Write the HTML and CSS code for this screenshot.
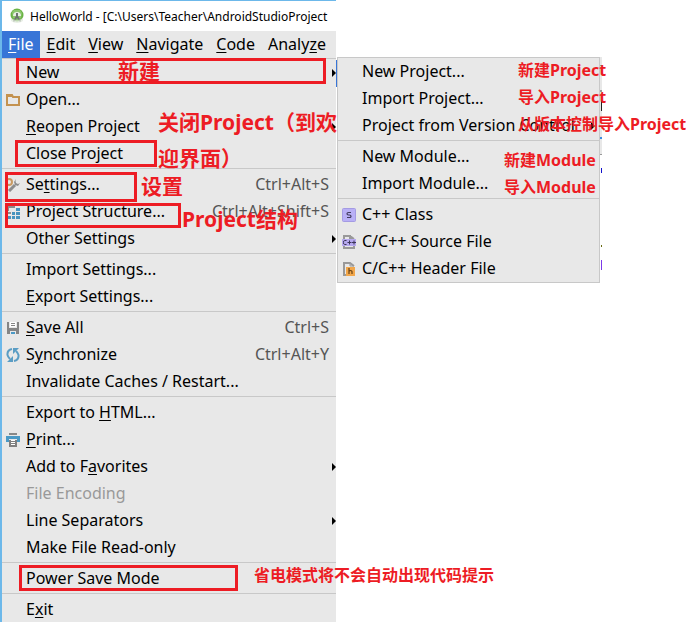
FILE: index.html
```html
<!DOCTYPE html>
<html lang="zh-CN">
<head>
    <meta charset="UTF-8">
    <meta name="viewport" content="width=device-width, initial-scale=1.0">
    <title>HelloWorld - File menu</title>
    <link rel="stylesheet" href="styles.css">
</head>
<body>
    <div class="window">
        <header class="titlebar">
            <svg class="logo" viewBox="0 0 16 16">
                <circle cx="8" cy="7" r="6.5" fill="#6ab344"/>
                <path d="M3 4l2-2 6 0 2 3-1 5-4 2-4-2z" fill="#8cc66d"/>
                <path d="M4 8a4 4 0 0 1 8 0z" fill="#e8eee5"/>
                <path d="M7 5h2v3l3 5-1 1-3-4-3 4-1-1 3-5z" fill="#6c746e"/>
                <path d="M2 10q6 4 12 0v3q-6 4-12 0z" fill="#dfe8dc" opacity=".7"/>
            </svg>
            <span class="title">HelloWorld - [C:\Users\Teacher\AndroidStudioProject</span>
        </header>

        <nav class="menubar">
            <button class="active"><u>F</u>ile</button>
            <button><u>E</u>dit</button>
            <button><u>V</u>iew</button>
            <button><u>N</u>avigate</button>
            <button><u>C</u>ode</button>
            <button>Analy<u>z</u>e</button>
        </nav>

        <ul class="menu">
            <li class="separator first"></li>
            <li class="item has-sub">
                <button>New</button>
                <span class="note big note-new">新建</span>
                <span class="mark mark-new"></span>

                <ul class="menu submenu">
                    <li class="item"><button>New Project...</button><span class="note note-project">新建Project</span></li>
                    <li class="item"><button>Import Project...</button><span class="note note-project">导入Project</span></li>
                    <li class="item has-sub"><button>Project from Version Control</button><span class="note note-project">从版本控制导入Project</span></li>
                    <li class="separator"></li>
                    <li class="item"><button>New Module...</button><span class="note note-module">新建Module</span></li>
                    <li class="item"><button>Import Module...</button><span class="note note-module">导入Module</span></li>
                    <li class="separator"></li>
                    <li class="item">
                        <svg class="icon" viewBox="0 0 14 14">
                            <rect x=".5" y=".5" width="13" height="13" rx="1" fill="#b9b0f6" stroke="#a49be3"/>
                            <path d="M9 4.5H6.5Q5 4.5 5 5.7T6.5 7h1Q9 7 9 8.3T7.500 9.500H5" fill="none" stroke="#413b5d" stroke-width="1.200"/>
                        </svg>
                        <button>C++ Class</button>
                    </li>
                    <li class="item">
                        <svg class="icon" viewBox="0 0 14 14">
                            <path d="M2 4V1h6l4 3M8 0v4h4M2 11v2h10v-2" fill="none" stroke="#999" stroke-width="2"/>
                            <path d="M0 4h14v7H0z" fill="#b6a9ef"/>
                            <path d="M4.500 5.500H2.500Q1.500 5.500 1.500 7.500T2.500 9.500h2M5.500 7.500h4M7.500 5.500v4M10 7.500h4M12 5.500v4" fill="none" stroke="#3d3659"/>
                        </svg>
                        <button>C/C++ Source File</button>
                    </li>
                    <li class="item">
                        <svg class="icon" viewBox="0 0 14 14">
                            <path d="M4 13H2V1h6l4 3" fill="none" stroke="#999" stroke-width="2"/>
                            <path d="M8 1v3h4" fill="none" stroke="#999"/>
                            <path d="M4 5h9v9H4z" fill="#f2a74b"/>
                            <path d="M7 6v6M7 9.500Q7 8.500 8.500 8.500T10 9.500V12" fill="none" stroke="#6b4416" stroke-width="1.200"/>
                        </svg>
                        <button>C/C++ Header File</button>
                    </li>
                    <!-- editor code peeking out behind the popup -->
                    <li class="peek" aria-hidden="true">
                        <svg width="2" height="226" viewBox="0 0 2 226">
                            <path d="M0 0h2v98H0z" fill="#e8e8e8"/>
                            <path d="M0 8h2v1H0zM0 33h2v2H0zM0 97h2v1H0z" fill="#999"/>
                            <path d="M1 43h1v11H1z" fill="#222"/>
                            <path d="M0 80h2v2H0z" fill="#3a8de0"/>
                            <path d="M1 111h1v5H1z" fill="#11c"/>
                            <path d="M1 188h1v2H1z" fill="#686a10"/>
                            <path d="M1 203h1v10H1z" fill="#7c3ae8"/>
                        </svg>
                    </li>
                </ul>
            </li>
            <li class="item">
                <svg class="icon" viewBox="0 0 14 14">
                    <path d="M1 12V2h5l1 2h6v8z" fill="none" stroke="#c4924f" stroke-width="2"/>
                    <path d="M1 2h5v2H1z" fill="#c4924f"/>
                </svg>
                <button>Open...</button>
            </li>
            <li class="item has-sub"><button><u>R</u>eopen Project</button></li>
            <li class="item">
                <button>Close Project</button>
                <span class="mark mark-close"></span>
                <span class="note big note-close">关闭Project（到欢<br>迎界面）</span>
            </li>
            <li class="separator"></li>
            <li class="item">
                <svg class="icon" viewBox="0 0 14 14">
                    <circle cx="3" cy="4" r="3" fill="none" stroke="#c99a62" stroke-width="2"/>
                    <path d="M3 13l6-6" stroke="#8c8c8c" stroke-width="3"/>
                    <path d="M10 1L8 4l1 3 3 1 2-3-2 1-2-1-.5-2z" fill="#8c8c8c"/>
                </svg>
                <button>Se<u>t</u>tings...</button>
                <kbd>Ctrl+Alt+S</kbd>
                <span class="mark mark-settings"></span>
                <span class="note big note-settings">设置</span>
            </li>
            <li class="item">
                <svg class="icon" viewBox="0 0 14 14">
                    <path d="M1 1h8v2H3v3H1zM1 7h4v2H1zM1 11h4v2H1z" fill="#8c8c8c"/>
                    <path d="M10 3h4v3h-4zM6 7h3v3H6zM10 7h4v3h-4zM6 11h3v3H6zM10 11h4v3h-4zM2 11h3v3H2z" fill="#4793be"/>
                </svg>
                <button>Project Structure...</button>
                <kbd>Ctrl+Alt+Shift+S</kbd>
                <span class="mark mark-structure"></span>
                <span class="note big note-structure">Project结构</span>
            </li>
            <li class="item has-sub"><button>Other Settings</button></li>
            <li class="separator"></li>
            <li class="item"><button>Import Settings...</button></li>
            <li class="item"><button><u>E</u>xport Settings...</button></li>
            <li class="separator"></li>
            <li class="item">
                <svg class="icon" viewBox="0 0 14 14">
                    <path d="M1 1h2v6h8V1h2v12h-3v-3H4v3H1z" fill="#858585"/>
                    <path d="M4 1h6v5H4z" fill="#fff"/>
                    <path d="M5 2.500h4M5 4.500h4" stroke="#858585"/>
                    <path d="M5 11h4v2H5z" fill="#4b99c5"/>
                </svg>
                <button><u>S</u>ave All</button>
                <kbd>Ctrl+S</kbd>
            </li>
            <li class="item">
                <svg class="icon" viewBox="0 0 14 14">
                    <path d="M6 1Q1 2 1.500 7 2 9 4 11M8 13Q13 12 12.500 7 12 5 10 3" fill="none" stroke="#5b9dc4" stroke-width="2"/>
                    <path d="M7 8v6H1zM7 6V0h6z" fill="#5b9dc4"/>
                </svg>
                <button>S<u>y</u>nchronize</button>
                <kbd>Ctrl+Alt+Y</kbd>
            </li>
            <li class="item"><button>Invalidate Caches / Restart...</button></li>
            <li class="separator"></li>
            <li class="item"><button>Export to <u>H</u>TML...</button></li>
            <li class="item">
                <svg class="icon" viewBox="0 0 14 14">
                    <path d="M3 0h8v2H3z" fill="#888"/>
                    <path d="M0 3h14v6h-3V6H3v3H0z" fill="#4b99c5"/>
                    <path d="M3 7h8v7H3z" fill="#808080"/>
                    <path d="M5 7h4v5H5z" fill="#fff"/>
                    <path d="M5 8.500h4M5 10.500h4" stroke="#808080"/>
                </svg>
                <button><u>P</u>rint...</button>
            </li>
            <li class="item has-sub"><button>Add to F<u>a</u>vorites</button></li>
            <li class="item"><button disabled>File Encoding</button></li>
            <li class="item has-sub"><button>Line Separators</button></li>
            <li class="item"><button>Make File Read-only</button></li>
            <li class="separator"></li>
            <li class="item">
                <button>Power Save Mode</button>
                <span class="mark mark-power"></span>
                <span class="note note-power">省电模式将不会自动出现代码提示</span>
            </li>
            <li class="separator"></li>
            <li class="item"><button>E<u>x</u>it</button></li>
        </ul>
    </div>
</body>
</html>
```
FILE: styles.css
```css
* {
    box-sizing: border-box;
}

body {
    margin: 0;
    height: 100vh;
    overflow: hidden;
    background: #fff;
    font-family: "Noto Sans", "Noto Sans CJK SC", sans-serif;
    font-size: 16px;
    color: #000;
}

.window {
    width: 336px;
    min-height: 100vh;
    background: #e8e8e8;
    border-top: 1px solid #6cb8ea;
    border-left: 2px solid #6cb8ea;
}

.titlebar {
    display: flex;
    align-items: center;
    gap: 5px;
    height: 30px;
    padding-left: 7px;
    background: #fff;
    overflow: hidden;
}

.logo {
    flex: none;
    width: 16px;
    height: 16px;
}

.title {
    font-size: 12px;
    white-space: nowrap;
}

button {
    padding: 0 0 2px;
    border: none;
    background: none;
    font: inherit;
    color: inherit;
    text-align: left;
    white-space: nowrap;
}

button:disabled {
    color: #999;
}

u {
    text-decoration-thickness: 1px;
    text-underline-offset: 2px;
}

.menubar {
    display: flex;
    gap: 1px;
    height: 27px;
}

.menubar button {
    padding: 0 6px 2px;
}

.menubar .active {
    background: #3875d7;
    color: #fff;
}

.menu {
    margin: 0;
    padding: 0;
    list-style: none;
}

.item {
    position: relative;
    display: flex;
    align-items: center;
    height: 27px;
    padding: 0 7px 0 24px;
}

.item button {
    flex: 1;
}

.icon {
    position: absolute;
    left: 4px;
    width: 14px;
    height: 14px;
}

kbd {
    padding-bottom: 2px;
    font: inherit;
    color: #555;
}

.has-sub::after {
    content: "";
    position: absolute;
    right: 0;
    border-left: 4px solid #000;
    border-top: 4px solid transparent;
    border-bottom: 4px solid transparent;
}

.separator {
    height: 4px;
    padding-top: 1px;
}

.separator::before {
    content: "";
    display: block;
    height: 1px;
    background: #c8c8c8;
}

.separator.first {
    height: 1px;
    padding: 0;
}

.submenu {
    position: absolute;
    top: -2px;
    left: 100%;
    z-index: 1;
    width: 263px;
    margin-left: 1px;
    border: 1px solid #c8c8c8;
    background: #e8e8e8;
}

/* selected row showing through beside the popup */
.submenu::before {
    content: "";
    position: absolute;
    top: 2px;
    left: -2px;
    width: 1px;
    height: 27px;
    background: #3875d7;
}

.submenu .has-sub::after {
    right: 4px;
}

.peek {
    position: absolute;
    top: -1px;
    left: 100%;
    margin-left: 1px;
}

.peek svg {
    display: block;
}

/* red annotations drawn over the menu */
.mark {
    position: absolute;
    border: 3px solid #ed1c24;
    pointer-events: none;
}

.note {
    position: absolute;
    z-index: 2;
    font-weight: bold;
    line-height: 24px;
    color: #ed1c24;
    white-space: nowrap;
    pointer-events: none;
}

.big {
    font-size: 21px;
    line-height: 36px;
}

.mark-new {
    top: -1px;
    left: 14px;
    right: 10px;
    height: 26px;
}

.mark-close {
    top: 0;
    left: 13px;
    width: 142px;
    height: 27px;
}

.mark-settings {
    top: 1px;
    left: 3px;
    width: 132px;
    height: 30px;
}

.mark-structure {
    top: 5px;
    left: 3px;
    width: 176px;
    height: 25px;
}

.mark-power {
    top: 0;
    left: 17px;
    width: 219px;
    height: 26px;
}

.note-new {
    top: -6px;
    left: 116px;
}

.note-close {
    top: -36px;
    left: 156px;
}

.note-settings {
    top: -3px;
    left: 139px;
}

.note-structure {
    top: 3px;
    left: 180px;
}

.note-power {
    left: 252px;
    top: -2px;
}

.note-project {
    left: 180px;
    top: 0;
}

.note-module {
    left: 166px;
    top: 5px;
}
```
